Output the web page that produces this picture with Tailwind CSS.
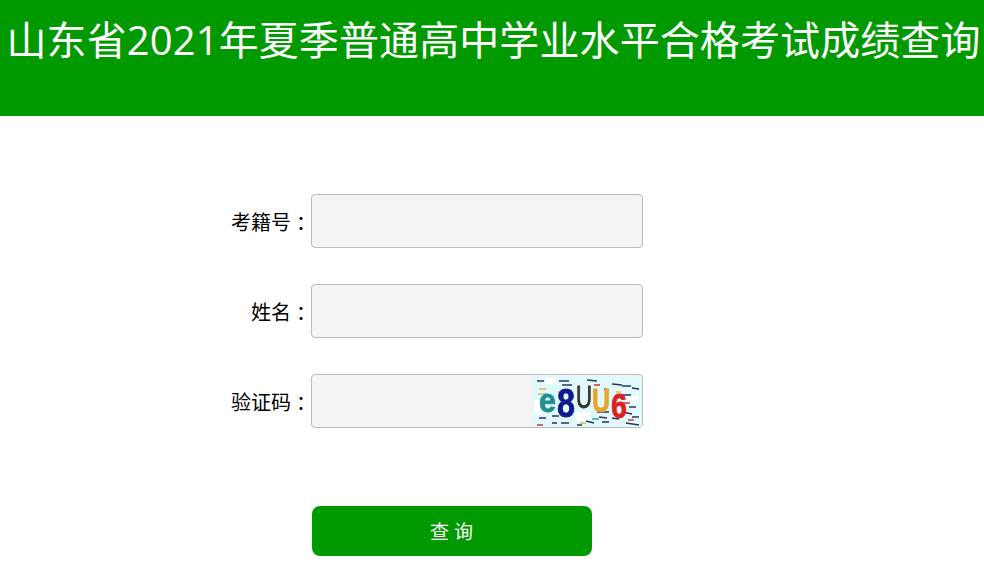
<!DOCTYPE html>
<html lang="zh-CN">
<head>
<meta charset="utf-8">
<title>成绩查询</title>
<script src="https://cdn.jsdelivr.net/npm/@tailwindcss/browser@4"></script>
</head>
<body class="bg-white font-['Open_Sans','Noto_Sans_CJK_SC',sans-serif] overflow-hidden">
<header class="h-[116px] bg-[#009900] pl-[3px] text-center text-white">
  <h1 class="text-[40px] leading-[80px] tracking-[0.1px] whitespace-nowrap">山东省2021年夏季普通高中学业水平合格考试成绩查询</h1>
</header>
<main class="pt-[78px] pl-[219px]">
  <form class="flex flex-col gap-9">
    <div class="flex items-center">
      <label class="w-[92px] pt-1 text-right text-[20px] text-black">考籍号<span class="inline-block translate-x-[5px]">：</span></label>
      <input class="w-[332px] h-[54px] rounded border border-[#bbbbbb] bg-[#f4f4f4]">
    </div>
    <div class="flex items-center">
      <label class="w-[92px] pt-1 text-right text-[20px] text-black">姓名<span class="inline-block translate-x-[5px]">：</span></label>
      <input class="w-[332px] h-[54px] rounded border border-[#bbbbbb] bg-[#f4f4f4]">
    </div>
    <div class="flex items-center">
      <label class="w-[92px] pt-1 text-right text-[20px] text-black">验证码<span class="inline-block translate-x-[5px]">：</span></label>
      <div class="relative w-[332px] h-[54px] rounded border border-[#bbbbbb] bg-[#f4f4f4] overflow-hidden">
        <svg class="absolute right-0 top-px blur-[0.5px]" width="110" height="51" viewBox="0 0 110 51">
          <rect width="110" height="51" fill="#e2f9fb"/>
          <g fill="#ffffff">
            <rect x="2" y="24" width="8" height="14"/><rect x="44" y="36" width="14" height="9"/><rect x="96" y="20" width="10" height="7"/><rect x="14" y="2" width="10" height="6"/>
          </g>
          <g stroke-width="1.4" fill="none">
            <path d="M5 5h7M27 5h10M30 9h10M55 4l10 1M80 8l10 1M90 10h9M100 12l7 1M72 13l5 1M90 19h9M97 31h7M65 36h12M67 41l8 1M90 36l10 2M7 42h7M20 40h7M20 47h5M29 47h8M45 49h5M54 45l8 2M70 46h7M80 42l7 1M94 47l13 2M100 41h7" stroke="#2a3560"/>
            <path d="M5 49h6M88 27h10M32 14h6M62 9h6M96 44h6" stroke="#c93a3a"/>
            <path d="M7 13h7M6 18h9M26 16h6M48 47h6M84 16h5" stroke="#d8b95a"/>
            <path d="M10 26h6M60 43h7" stroke="#3aa6a0"/>
          </g>
          <g font-family="'Liberation Sans',sans-serif" font-weight="700" stroke-width="0.8">
            <text x="7" y="36" font-size="34" fill="#1f8f8f" stroke="#1f8f8f" textLength="17" lengthAdjust="spacingAndGlyphs">e</text>
            <text x="25" y="41" font-size="40" fill="#0d1a8c" stroke="#0d1a8c" textLength="18" lengthAdjust="spacingAndGlyphs">8</text>
            <text x="44" y="32" font-size="32" fill="#333322" stroke="#333322" font-weight="400" textLength="16" lengthAdjust="spacingAndGlyphs">U</text>
            <text x="60" y="36" font-size="33" fill="#e8a528" stroke="#e8a528" textLength="18" lengthAdjust="spacingAndGlyphs">U</text>
            <text x="79" y="42" font-size="35" fill="#e02020" stroke="#e02020" textLength="16" lengthAdjust="spacingAndGlyphs">6</text>
          </g>
        </svg>
      </div>
    </div>
    <button type="button" class="mt-[42px] ml-[93px] w-[280px] h-[50px] rounded-lg bg-[#009900] pt-[3px] pl-1 text-white text-[19px] tracking-[5px]">查询</button>
  </form>
</main>
</body>
</html>
